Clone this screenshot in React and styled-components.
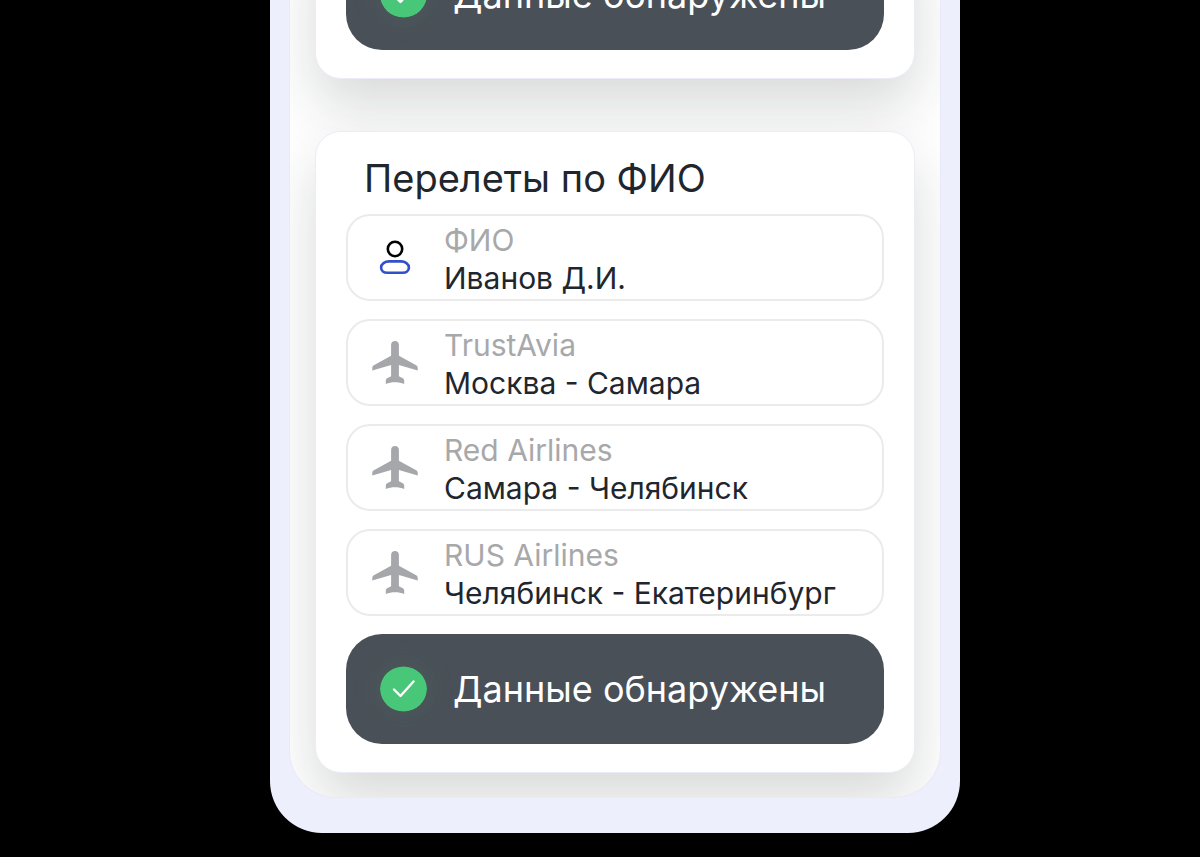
import React from 'react'
import styled, {createGlobalStyle} from 'styled-components';

const GlobalStyle = createGlobalStyle`
  * {
    box-sizing: border-box;
  }

  body {
    margin: 0;
    background-color: #000000;
    font-family: Inter, "Noto Sans", sans-serif;
    color: #1F262E;
  }
`;

/* pinned to the bottom, like a list that has been scrolled to its end */
const Page = styled.main`
  display: grid;
  grid-template-columns: 9fr 23fr 8fr;
  align-content: end;
  height: 100vh;
  padding-bottom: 24px;
  overflow: hidden;
`;

const Phone = styled.div`
  grid-column: 2;
  padding: 0 20px 36px;
  border-radius: 52px;
  background-color: #EDEFFD;
`;

const Screen = styled.div`
  display: flex;
  flex-direction: column;
  gap: 52px;
  padding: 24px 25px;
  border-radius: 46px;
  background-color: #FFFFFF;
  box-shadow: 0 0 0 1px #E9E9F8;
  overflow: hidden;
`;

const Card = styled.section`
  display: flex;
  flex-direction: column;
  gap: 18px;
  padding: 24px 30px 28px;
  border: 1px solid #ECECF8;
  border-radius: 26px;
  background-color: #FFFFFF;
  box-shadow: 0 28px 56px rgba(28, 38, 36, 0.17);
`;

const Title = styled.h2`
  margin: 0 0 -4px;
  padding-left: 18px;
  font-size: 38px;
  font-weight: 400;
  line-height: 44px;
`;

const List = styled.ul`
  display: flex;
  flex-direction: column;
  gap: 18px;
  margin: 0;
  padding: 0;
  list-style: none;
`;

const Row = styled.li`
  display: grid;
  grid-template-columns: 94px 1fr;
  column-gap: 2px;
  align-items: center;
  border: 2px solid #EBEBEC;
  border-radius: 24px;
  white-space: nowrap;
`;

const RowIcon = styled.span`
  display: flex;
  justify-content: center;
`;

const RowText = styled.div`
  padding: 5px 0 2px;
  font-size: 30px;
  line-height: 38px;
`;

const Label = styled.div`
  color: #A7A8AA;
`;

const Status = styled.div`
  display: flex;
  align-items: center;
  gap: 26px;
  height: 110px;
  padding: 0 34px;
  border-radius: 36px;
  background-color: #4A5058;
  color: #FFFFFF;
  font-size: 36px;
  white-space: nowrap;
`;

const StatusIcon = styled.svg`
  flex: none;
  border-radius: 50%;
  box-shadow: 0 0 32px rgba(72, 199, 120, 0.12);
`;

const PersonIcon = () => (
    <svg width="32" height="36" viewBox="0 0 32 36" fill="none" strokeWidth="2.6" aria-hidden="true">
        <circle cx="16" cy="9" r="7.2" stroke="#000000"/>
        <path
            d="M10 21.4h12c4 0 7.9 2.4 7.9 6.3 0 3.2-2.7 5-6.1 5H8.2c-3.4 0-6.1-1.8-6.1-5 0-3.9 3.9-6.3 7.900-6.300z"
            stroke="#3350CB"/>
    </svg>
);

const PlaneIcon = () => (
    <svg width="46" height="43" viewBox="0 0 46 43" fill="#A5A7AB" aria-hidden="true">
        <path
            d="M23 0c2.3 0 3.9 1.7 3.9 3.9v10.8l16.8 9.3c1.4.8 2 1.5 2 2.8v2.800l-18.800-5.600v11.200l3 1.600c1.500.8 2.300 1.600 2.300 3v3.200C29.700 41.700 26 41.200 23 41.200s-6.700.5-9.200 1.800v-3.200c0-1.400.8-2.200 2.300-3l3-1.600V24L.3 29.600v-2.800c0-1.300.6-2 2-2.800l16.800-9.300V3.900C19.100 1.700 20.700 0 23 0z"/>
    </svg>
);

const Found = () => (
    <Status role="status">
        <StatusIcon width="47" height="46" viewBox="0 0 47 46" fill="none" aria-hidden="true">
            <ellipse cx="23.5" cy="23" rx="23.5" ry="22.5" fill="#48C778"/>
            <path d="M14 23.5l6.5 6.5 13-14.5" stroke="#FFFFFF" strokeWidth="2.4" strokeLinecap="round"
                  strokeLinejoin="round"/>
        </StatusIcon>
        Данные обнаружены
    </Status>
);

const flights = [
    {airline: 'TrustAvia', route: 'Москва - Самара'},
    {airline: 'Red Airlines', route: 'Самара - Челябинск'},
    {airline: 'RUS Airlines', route: 'Челябинск - Екатеринбург'},
];

const App = () => (
    <Page>
        <GlobalStyle/>
        <Phone>
            <Screen>
                <Card>
                    <Found/>
                </Card>
                <Card>
                    <Title>Перелеты по ФИО</Title>
                    <List>
                        <Row>
                            <RowIcon><PersonIcon/></RowIcon>
                            <RowText>
                                <Label>ФИО</Label>
                                <div>Иванов Д.И.</div>
                            </RowText>
                        </Row>
                        {flights.map(flight => (
                            <Row key={flight.airline}>
                                <RowIcon><PlaneIcon/></RowIcon>
                                <RowText>
                                    <Label>{flight.airline}</Label>
                                    <div>{flight.route}</div>
                                </RowText>
                            </Row>
                        ))}
                    </List>
                    <Found/>
                </Card>
            </Screen>
        </Phone>
    </Page>
);

export default App
